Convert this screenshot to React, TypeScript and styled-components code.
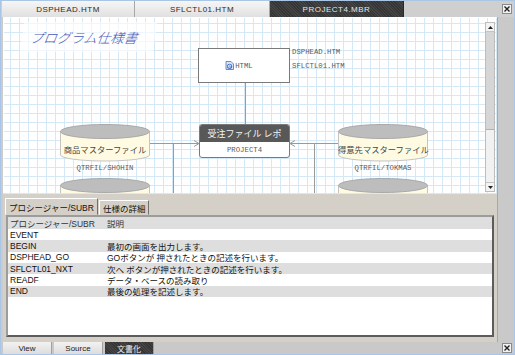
import styled, { createGlobalStyle } from "styled-components";

const GlobalStyle = createGlobalStyle`
  html, body { margin: 0; padding: 0; background: #fff; }
  body { font-family: "Liberation Sans", "Noto Sans CJK JP", sans-serif; }
`;

const Window = styled.div`
  width: 515px;
  height: 355px;
  box-sizing: border-box;
  border: 1px solid #a9c6e6;
  background: #cbcbcb;
  display: flex;
  flex-direction: column;
  overflow: hidden;
`;

const TopBar = styled.div`
  height: 16px;
  flex: none;
  display: flex;
  align-items: stretch;
  padding-left: 1px;
  background: #cfcfcf;
`;

const DocTab = styled.div<{ $active?: boolean; $w: number }>`
  width: ${(p) => p.$w}px;
  display: flex;
  align-items: center;
  justify-content: center;
  font-size: 8px;
  letter-spacing: 0.5px;
  color: ${(p) => (p.$active ? "#e4e4e4" : "#2a2a2a")};
  background: ${(p) =>
    p.$active
      ? "repeating-linear-gradient(45deg, #353535 0 1px, #454545 1px 2px)"
      : "linear-gradient(#f6f6f6, #e0e0e0)"};
  border-right: 1px solid ${(p) => (p.$active ? "#2a2a2a" : "#a8a8a8")};
`;

const CloseBox = styled.div`
  margin-left: auto;
  margin-right: 2px;
  align-self: center;
  width: 10px;
  height: 10px;
  box-sizing: border-box;
  border: 1px solid #8a8a8a;
  background: #f2f2f2;
  display: flex;
  align-items: center;
  justify-content: center;
`;

const Body = styled.div`
  flex: 1;
  display: flex;
  min-height: 0;
`;

const MainCol = styled.div`
  width: 496px;
  box-sizing: border-box;
  padding-left: 2px;
  display: flex;
  flex-direction: column;
`;

const RightStrip = styled.div`
  flex: 1;
  border-left: 1px solid #a8a8a8;
  background: #c9c9c9;
`;

const CanvasFrame = styled.div`
  height: 176px;
  flex: none;
  box-sizing: border-box;
  display: flex;
  border-top: 1px solid #fff;
  border-left: 1px solid #fff;
  background-color: #fff;
  background-image: linear-gradient(#d4e8f5 1px, transparent 1px),
    linear-gradient(90deg, #d4e8f5 1px, transparent 1px);
  background-size: 9px 9px;
  background-position: 6px 5px;
`;

const Board = styled.div`
  flex: 1;
  position: relative;
  overflow: hidden;
`;

const Connectors = styled.svg`
  position: absolute;
  left: 0;
  top: 0;
  width: 100%;
  height: 100%;
`;

const TitlePatch = styled.div`
  position: absolute;
  left: 18px;
  top: 4px;
  width: 133px;
  height: 30px;
  background: rgba(255, 255, 255, 0.65);
  display: flex;
  align-items: center;
  padding-left: 8px;
  box-sizing: border-box;
  font-family: "Noto Sans CJK JP", sans-serif;
  font-style: italic;
  font-weight: 300;
  font-size: 13.5px;
  color: #4858b8;
  transform: skewX(-8deg);
`;

const Node = styled.div<{ $x: number; $y: number }>`
  position: absolute;
  left: ${(p) => p.$x}px;
  top: ${(p) => p.$y}px;
`;

const HtmlBox = styled(Node)`
  width: 92px;
  height: 35px;
  box-sizing: border-box;
  border: 1px solid #7a7a7a;
  background: #fff;
  display: flex;
  align-items: center;
  justify-content: center;
  gap: 1px;
  padding-right: 10px;
`;

const MonoLabel = styled.span`
  font-family: "Liberation Mono", monospace;
  font-size: 7.3px;
  line-height: 8px;
  color: #5a5a5a;
  white-space: nowrap;
`;

const FileList = styled(Node)`
  display: flex;
  flex-direction: column;
  gap: 6px;
`;

const ReportBox = styled(Node)`
  width: 91px;
  height: 34px;
  box-sizing: border-box;
  border: 1px solid #7a7a7a;
  border-radius: 3px;
  background: #fff;
  overflow: hidden;
  display: flex;
  flex-direction: column;
`;

const ReportHead = styled.div`
  height: 17px;
  background: #585858;
  color: #f4f4f4;
  font-family: "Noto Sans CJK JP", sans-serif;
  font-size: 9px;
  display: flex;
  align-items: center;
  justify-content: center;
`;

const ReportFoot = styled.div`
  flex: 1;
  display: flex;
  align-items: center;
  justify-content: center;
`;

const CylWrap = styled(Node)`
  width: 90px;
  height: 38px;
`;

const CylLabel = styled.div`
  position: absolute;
  left: 0;
  right: 0;
  top: 19px;
  text-align: center;
  font-family: "Noto Sans CJK JP", sans-serif;
  font-size: 8.3px;
  color: #444;
  white-space: nowrap;
`;

const CylCaption = styled(Node)`
  width: 90px;
  display: flex;
  justify-content: center;
`;

const ScrollBar = styled.div`
  width: 10px;
  margin: 4px 2px 1px 0;
  display: flex;
  flex-direction: column;
  background: #ececec;
  box-sizing: border-box;
  border: 1px solid #bdbdbd;
`;

const ScrollBtn = styled.div`
  height: 8px;
  flex: none;
  background: #f3f3f3;
  border-bottom: 1px solid #c4c4c4;
  display: flex;
  align-items: center;
  justify-content: center;
  &:last-child {
    border-bottom: none;
    border-top: 1px solid #c4c4c4;
  }
`;

const Thumb = styled.div`
  height: 97px;
  flex: none;
  background: #d6d6d6;
  border-bottom: 1px solid #b0b0b0;
`;

const Track = styled.div`
  flex: 1;
  background: #f1f1f1;
`;

const BottomPanel = styled.div`
  flex: 1;
  display: flex;
  flex-direction: column;
  background: #d4d0c8;
  border-top: 1px solid #e6e6e6;
  padding: 4px 3px 5px 1px;
`;

const SubTabs = styled.div`
  height: 17px;
  flex: none;
  display: flex;
  align-items: flex-end;
  gap: 1px;
  padding-left: 1px;
`;

const SubTab = styled.div<{ $active?: boolean }>`
  height: ${(p) => (p.$active ? 17 : 15)}px;
  box-sizing: border-box;
  padding: 0 3px;
  display: flex;
  align-items: center;
  font-size: 8.5px;
  color: #111;
  border: 1px solid;
  border-color: #fff #707070 transparent #fff;
  background: #d4d0c8;
`;

const ListBox = styled.div`
  flex: 1;
  margin-left: 2px;
  background: #fff;
  border: 2px solid;
  border-color: #9c9c9c #5c5c5c #5c5c5c #9c9c9c;
`;

const Row = styled.div<{ $shade?: boolean; $head?: boolean }>`
  display: grid;
  grid-template-columns: 97px 1fr;
  height: ${(p) => (p.$head ? 12 : 11.33)}px;
  align-items: center;
  padding-left: 2px;
  background: ${(p) => (p.$shade ? "#dedede" : "#fff")};
  font-size: 8.5px;
  color: ${(p) => (p.$head ? "#333" : "#111")};
  white-space: nowrap;
  span {
    overflow: hidden;
  }
`;

const BottomBar = styled.div`
  height: 12px;
  flex: none;
  display: flex;
  align-items: stretch;
  padding-left: 2px;
  gap: 2px;
  background: #c9c9c9;
`;

const ViewTab = styled.div<{ $active?: boolean }>`
  width: 48px;
  display: flex;
  align-items: center;
  justify-content: center;
  font-size: 8px;
  color: ${(p) => (p.$active ? "#f0f0f0" : "#222")};
  background: ${(p) =>
    p.$active
      ? "repeating-linear-gradient(45deg, #353535 0 1px, #454545 1px 2px)"
      : "linear-gradient(#f2f2f2, #dddddd)"};
  border-right: 1px solid #a0a0a0;
`;

const BottomClose = styled(CloseBox)`
  margin-right: 2px;
`;

function CloseIcon() {
  return (
    <svg width="6" height="6" viewBox="0 0 6 6">
      <path d="M0.5 0.5 L5.5 5.5 M5.5 0.5 L0.5 5.5" stroke="#222" strokeWidth="1.4" />
    </svg>
  );
}

function Arrow({ up }: { up?: boolean }) {
  return (
    <svg width="5" height="3" viewBox="0 0 5 3">
      <path d={up ? "M0 3 L2.5 0 L5 3 Z" : "M0 0 L2.5 3 L5 0 Z"} fill="#222" />
    </svg>
  );
}

function HtmlIcon() {
  return (
    <svg width="9" height="9" viewBox="0 0 9 9">
      <path d="M1 0.5 H6 L8.5 3 V8.5 H1 Z" fill="#dbe6f6" stroke="#4b70b5" strokeWidth="0.8" />
      <circle cx="4.6" cy="5.3" r="2.6" fill="#3d6cc6" />
      <path d="M3.3 5.1 H6 M6 5.1 A1.4 1.4 0 1 0 5.4 6.5" stroke="#fff" strokeWidth="0.8" fill="none" />
    </svg>
  );
}

function Cylinder({ x, y, label }: { x: number; y: number; label?: string }) {
  return (
    <CylWrap $x={x} $y={y}>
      <svg width="90" height="38" viewBox="0 0 90 38">
        <path
          d="M0.5 7.5 V31 A44.5 6 0 0 0 89.5 31 V7.5 Z"
          fill="#fffbe3"
          stroke="#c4c4c4"
        />
        <ellipse cx="45" cy="7.5" rx="44.5" ry="7" fill="#bdbdbd" stroke="#a9a9a9" />
      </svg>
      {label && <CylLabel>{label}</CylLabel>}
    </CylWrap>
  );
}

const procedures = [
  { name: "EVENT", desc: "" },
  { name: "BEGIN", desc: "最初の画面を出力します。" },
  { name: "DSPHEAD_GO", desc: "GOボタンが 押されたときの記述を行います。" },
  { name: "SFLCTL01_NXT", desc: "次へ ボタンが押されたときの記述を行います。" },
  { name: "READF", desc: "データ・ベースの読み取り" },
  { name: "END", desc: "最後の処理を記述します。" },
];

export default function App() {
  return (
    <>
      <GlobalStyle />
      <Window>
        <TopBar>
          <DocTab $w={132}>DSPHEAD.HTM</DocTab>
          <DocTab $w={134}>SFLCTL01.HTM</DocTab>
          <DocTab $w={133} $active>
            PROJECT4.MBR
          </DocTab>
          <CloseBox>
            <CloseIcon />
          </CloseBox>
        </TopBar>
        <Body>
          <MainCol>
            <CanvasFrame>
              <Board>
                <Connectors>
                  <g stroke="#9a9a9a" strokeWidth="1" fill="none">
                    <path d="M241.5 65 V106" />
                    <path d="M146 125.5 H195" />
                    <path d="M190 122.5 L195 125.5 L190 128.5" />
                    <path d="M169.5 125.5 V176" />
                    <path d="M334 125.5 H286" />
                    <path d="M291 122.5 L286 125.5 L291 128.5" />
                    <path d="M310.5 125.5 V176" />
                  </g>
                </Connectors>
                <TitlePatch>プログラム仕様書</TitlePatch>
                <HtmlBox $x={194} $y={30}>
                  <HtmlIcon />
                  <MonoLabel>HTML</MonoLabel>
                </HtmlBox>
                <FileList $x={288} $y={30}>
                  <MonoLabel>DSPHEAD.HTM</MonoLabel>
                  <MonoLabel>SFLCTL01.HTM</MonoLabel>
                </FileList>
                <ReportBox $x={195} $y={106}>
                  <ReportHead>受注ファイル レポ</ReportHead>
                  <ReportFoot>
                    <MonoLabel>PROJECT4</MonoLabel>
                  </ReportFoot>
                </ReportBox>
                <Cylinder x={56} y={106} label="商品マスターファイル" />
                <CylCaption $x={56} $y={146}>
                  <MonoLabel>QTRFIL/SHOHIN</MonoLabel>
                </CylCaption>
                <Cylinder x={56} y={160} />
                <Cylinder x={334} y={106} label="得意先マスターファイル" />
                <CylCaption $x={334} $y={146}>
                  <MonoLabel>QTRFIL/TOKMAS</MonoLabel>
                </CylCaption>
                <Cylinder x={334} y={160} />
              </Board>
              <ScrollBar>
                <ScrollBtn>
                  <Arrow up />
                </ScrollBtn>
                <Thumb />
                <Track />
                <ScrollBtn>
                  <Arrow />
                </ScrollBtn>
              </ScrollBar>
            </CanvasFrame>
            <BottomPanel>
              <SubTabs>
                <SubTab $active>プロシージャー/SUBR</SubTab>
                <SubTab>仕様の詳細</SubTab>
              </SubTabs>
              <ListBox>
                <Row $head $shade>
                  <span>プロシージャー/SUBR</span>
                  <span>説明</span>
                </Row>
                {procedures.map((p, i) => (
                  <Row key={p.name} $shade={i % 2 === 1}>
                    <span>{p.name}</span>
                    <span>{p.desc}</span>
                  </Row>
                ))}
              </ListBox>
            </BottomPanel>
          </MainCol>
          <RightStrip />
        </Body>
        <BottomBar>
          <ViewTab>View</ViewTab>
          <ViewTab>Source</ViewTab>
          <ViewTab $active>文書化</ViewTab>
          <BottomClose>
            <CloseIcon />
          </BottomClose>
        </BottomBar>
      </Window>
    </>
  );
}
